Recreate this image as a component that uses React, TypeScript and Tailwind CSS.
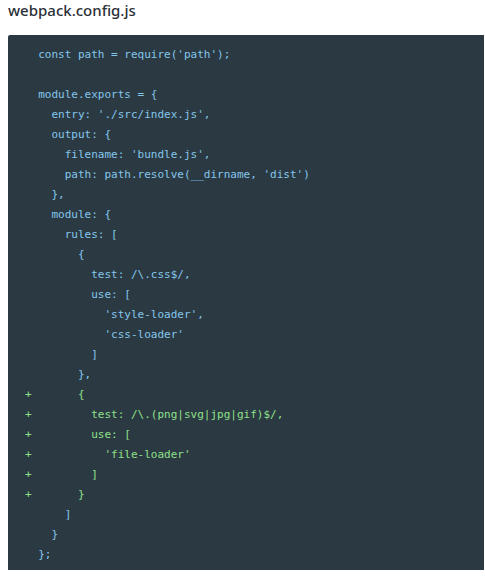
const lines: { add?: boolean; text: string }[] = [
  { text: "const path = require('path');" },
  { text: "" },
  { text: "module.exports = {" },
  { text: "  entry: './src/index.js'," },
  { text: "  output: {" },
  { text: "    filename: 'bundle.js'," },
  { text: "    path: path.resolve(__dirname, 'dist')" },
  { text: "  }," },
  { text: "  module: {" },
  { text: "    rules: [" },
  { text: "      {" },
  { text: "        test: /\\.css$/," },
  { text: "        use: [" },
  { text: "          'style-loader'," },
  { text: "          'css-loader'" },
  { text: "        ]" },
  { text: "      }," },
  { add: true, text: "      {" },
  { add: true, text: "        test: /\\.(png|svg|jpg|gif)$/," },
  { add: true, text: "        use: [" },
  { add: true, text: "          'file-loader'" },
  { add: true, text: "        ]" },
  { add: true, text: "      }" },
  { text: "    ]" },
  { text: "  }" },
  { text: "};" },
];

export default function App() {
  return (
    <div className="w-[485px] h-[576px] bg-white overflow-hidden">
      <h3 className="pl-2 pt-[1px] h-[35px] text-[15px] font-medium text-[#2b3036] font-['Noto_Sans',sans-serif] leading-[18px]">
        webpack.config.js
      </h3>
      <pre className="ml-2 w-[476px] h-[535px] rounded-tl-[2px] bg-[#2b3a42] pl-[17px] pt-[10px] font-['DejaVu_Sans_Mono',monospace] text-[11px] leading-[20px]">
        {lines.map((l, i) => (
          <div key={i} className={l.add ? "text-[#8fe08a]" : "text-[#85c6ec]"}>
            {l.add ? "+ " : "  "}
            {l.text}
          </div>
        ))}
      </pre>
    </div>
  );
}
